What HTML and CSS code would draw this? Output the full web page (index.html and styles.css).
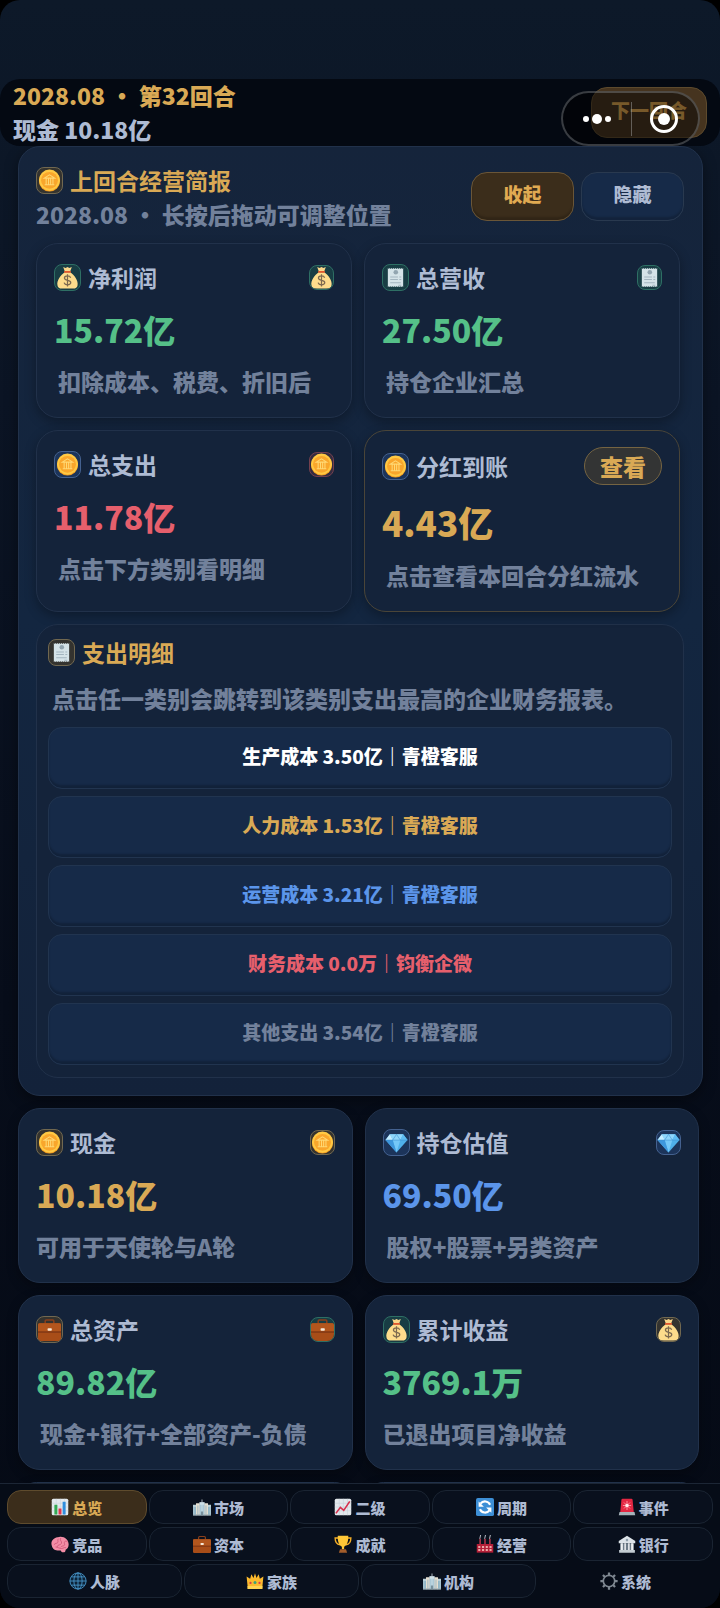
FILE: index.html
```html
<!DOCTYPE html>
<html lang="zh-CN">
<head>
<meta charset="utf-8">
<meta name="viewport" content="width=device-width, initial-scale=1">
<title>总览</title>
<link rel="stylesheet" href="styles.css">
</head>
<body>
<svg class="sprite" aria-hidden="true">
  <symbol id="coin" viewBox="0 0 24 24">
    <circle cx="12" cy="12.5" r="11" fill="#f39a1e"/><circle cx="12" cy="11.6" r="11" fill="#ffc944"/><circle cx="12" cy="11.8" r="8.8" fill="#f9a62b"/>
    <path d="M6.5 9.5 12 6l5.500 3.500zM7 16.500h10M8.500 10v6M11 10v6M13.200 10v6M15.600 10v6" fill="none" stroke="#ffd873" stroke-width="1.100"/>
  </symbol>
  <symbol id="bag" viewBox="0 0 24 24">
    <path d="M7.500 1 10 2l2-1 2 1 2.500-1-1.800 5H9.300z" fill="#f9d68a"/>
    <path d="M9 6.500h6c4 3 8.300 8.500 7.500 13.500-.3 2.500-2 3.500-4.500 3.500H6C3.500 23.500 1.800 22.500 1.500 20 .7 15 5 9.500 9 6.500z" fill="#fddc8c"/>
    <path d="M8.500 5.200h7v1.900h-7z" fill="#e2582e"/>
    <path d="M15.300 12.200c-.5-1.400-1.800-1.900-3.300-1.900-1.800 0-3.200.8-3.200 2.300 0 3.500 6.600 1.300 6.600 4.700 0 1.500-1.500 2.300-3.400 2.300-1.800 0-3.100-.7-3.500-2.200M12 8.500v13" fill="none" stroke="#7d6a50" stroke-width="1.300"/>
  </symbol>
  <symbol id="receipt" viewBox="0 0 24 24">
    <path d="M4 2l1 1 1-1 1 1 1-1 1 1 1-1 1 1 1-1 1 1 1-1 1 1 1-1 1 1 1-1 1 1 1-1v20l-1-1-1 1-1-1-1 1-1-1-1 1-1-1-1 1-1-1-1 1-1-1-1 1-1-1-1 1-1-1-1 1z" fill="#d5e3e8"/>
    <circle cx="12.300" cy="6.500" r="2.400" fill="#92a5b0"/><path d="M6.500 11.500h8M16 11.500h2M6.500 14h8M16 14h2M6.500 17.500h11M15 20h3" stroke="#a3b5bf" stroke-width="1.100"/>
  </symbol>
  <symbol id="gem" viewBox="0 0 24 24">
    <path d="M5 3.500h14l4.500 6L12 22.500.5 9.500z" fill="#4fb0ea"/>
    <path d="M5 3.500h14l-3 6H8z" fill="#8fd6fb"/><path d="M5 3.500 8 9.500H.5z" fill="#c5edff"/><path d="M19 3.500 16 9.500h7.500z" fill="#5fbcf2"/><path d="M8 9.500h8l-4 13z" fill="#75c8f7"/><path d="M.5 9.500H8l4 13z" fill="#3e97dc"/><path d="m8 9.500 4-6 4 6M.5 9.500h23" fill="none" stroke="#3f91d2" stroke-width=".6"/>
  </symbol>
  <symbol id="case" viewBox="0 0 24 24">
    <path d="M7.500 6V3.200c0-.7.400-1.200 1.200-1.200h6.600c.8 0 1.200.5 1.200 1.200V6" fill="none" stroke="#8a3f1b" stroke-width="1.600"/>
    <rect x="0" y="5.500" width="24" height="18.500" rx="1.800" fill="#a84d18"/><path d="M0 7.300c0-1.200.7-1.800 1.800-1.800h20.400c1.100 0 1.800.6 1.800 1.800v7H0z" fill="#b3561d"/><path d="M0 14.200h24v1H0z" fill="#6d2d12"/><rect x="10" y="10.600" width="4.400" height="2.600" rx=".8" fill="#f7e9d8"/>
  </symbol>
  <symbol id="bars" viewBox="0 0 24 24">
    <rect x="1" y="1" width="22" height="22" rx="2" fill="#e4e9ed"/><path d="M1 7h22M1 12h22M1 17h22M7 1v22M12.500 1v22M18 1v22" stroke="#c8d2da" stroke-width=".7"/>
    <path d="M4.500 9h4v13h-4z" fill="#34a853"/><path d="M10 14h4v8h-4z" fill="#e0344e"/><path d="M15.500 5h4v17h-4z" fill="#2f8ede"/>
  </symbol>
  <symbol id="city" viewBox="0 0 24 24">
    <path d="M0 9h5v14H0zM19 9h5v14h-5z" fill="#b7cfd8"/><path d="M4 7h5v16H4zM15 7h5v16h-5z" fill="#e5ded0"/><path d="M8.500 5.500h7V23h-7z" fill="#cfe2ea"/><path d="M11.500 2h1v4h-1z" fill="#dfe8ee"/>
    <path d="M1.500 12v10M3.200 12v10M6.500 10v12M10.500 9v13M13.500 9v13M17.300 10v12M20.800 12v10M22.500 12v10" stroke="#6f9fb7" stroke-width=".8"/><path d="M0 22h24v1.500H0z" fill="#8fa1aa"/><path d="M10.500 18h3v5h-3z" fill="#78909c"/>
  </symbol>
  <symbol id="trend" viewBox="0 0 24 24">
    <rect x="1" y="1" width="22" height="22" rx="2" fill="#e3e8ec"/><path d="M1 7h22M1 12h22M1 17h22M7 1v22M12.500 1v22M18 1v22" stroke="#c4ced6" stroke-width=".7"/><path d="m2.500 20.500 6-8 4.500 4L21 4.500" fill="none" stroke="#d72f4d" stroke-width="2.200"/>
  </symbol>
  <symbol id="cycle" viewBox="0 0 24 24">
    <rect x="0" y="0" width="24" height="24" rx="2.500" fill="#3d8fd6"/><path d="M18.800 9A7.500 7.500 0 0 0 6 7.500M5.200 15A7.500 7.500 0 0 0 18 16.500" fill="none" stroke="#fff" stroke-width="2.800"/><path d="M3.500 4.500v7h7zM20.500 19.500v-7h-7z" fill="#fff"/>
  </symbol>
  <symbol id="siren" viewBox="0 0 24 24">
    <path d="M3 19 4.500 2.500Q4.700 1 6.200 1h11.600q1.500 0 1.700 1.500L21 19z" fill="#e32742"/><path d="M12 4v12M6.500 10h11M8 6l8 8M16 6l-8 8" stroke="#ff98a5" stroke-width="1.200"/><circle cx="12" cy="10" r="2.200" fill="#fff0f0"/><path d="M2 18.500h20l1 4.500H1z" fill="#a5b2b9"/>
  </symbol>
  <symbol id="brain" viewBox="0 0 24 24">
    <path d="M1 14C-1 8 4 2.500 11 2.500c7-1 13 4 12.500 10.500 0 3.500-2 6-4 6.500 0 2-1 3.500-3 3.500-2 .2-3-1-3.500-2.500-5 1-11-.5-12-6.500z" fill="#f48da6"/><path d="M4 13c2-3 4-1 5-3s-1-3 1-5M13 4c-2 4 2 4 1 7s-5 1-6 5M22 9c-3-2-5 0-4 3s-3 2-5 4M6 16c3 0 5 2 8 2s3-2 6-1" fill="none" stroke="#cf5577" stroke-width="1.100"/>
  </symbol>
  <symbol id="cup" viewBox="0 0 24 24">
    <path d="M6 4H1.500c0 5 2 8.500 6.500 9M18 4h4.500c0 5-2 8.500-6.500 9" fill="none" stroke="#f4ae27" stroke-width="1.800"/><path d="M5 1h14c.3 7-1.500 13-5.500 14.500V19h-3v-3.500C6.500 14 4.700 8 5 1z" fill="#ffc737"/><path d="M8 19h8l1.500 4.500h-11z" fill="#a35d2b"/>
  </symbol>
  <symbol id="factory" viewBox="0 0 24 24">
    <path d="M5.500 5v9M12 5v9M18.500 5v9" stroke="#b8354b" stroke-width="2"/><path d="m5 5 1.200-5M11.500 5l1.200-5M18 5l1.200-5" stroke="#c8ced6" stroke-width="1.200"/><path d="M1 12h22v11.500H1z" fill="#b51f38"/><path d="M3 15h2.800v2H3zM8 15h2.800v2H8zM13 15h2.800v2H13zM18 15h2.800v2H18zM3 19h2.800v2H3zM8 19h2.800v2H8zM13 19h2.800v2H13zM18 19h2.800v2H18z" fill="#ffd6cc"/>
  </symbol>
  <symbol id="bank" viewBox="0 0 24 24">
    <path d="M12 1 23 8v3H1V8z" fill="#dce3e8"/><path d="M3 11h18v9H3z" fill="#6d7c88"/><path d="M3.500 11h3v10h-3zM8.500 11h2v10h-2zM13.500 11h2v10h-2zM17.500 11h3v10h-3z" fill="#edf1f3"/><path d="M1.500 20h21v3.500h-21z" fill="#c3ccd2"/><circle cx="12" cy="6.800" r="1.700" fill="#90a0ac"/>
  </symbol>
  <symbol id="globe" viewBox="0 0 24 24">
    <circle cx="12" cy="12" r="10.800" fill="#0c2338"/><g fill="none" stroke="#4795c9" stroke-width="1.200"><circle cx="12" cy="12" r="10.800"/><ellipse cx="12" cy="12" rx="5.500" ry="10.800"/><path d="M12 1v22M1 12h22M3 6.500h18M3 17.500h18"/></g>
  </symbol>
  <symbol id="crown" viewBox="0 0 24 24">
    <path d="m.8 6 4.700 3 1.700-6L10 8l2-6.500L14 8l2.800-5 1.700 6 4.700-3-1.700 16.500h-19z" fill="#fbb92d"/><path d="M2 18.500h20v4H2z" fill="#ffd454"/><circle cx="12" cy="14" r="2" fill="#39a47a"/><circle cx="6" cy="14.500" r="1.500" fill="#d83b50"/><circle cx="18" cy="14.500" r="1.500" fill="#d83b50"/>
  </symbol>
  <symbol id="gear" viewBox="0 0 24 24">
    <circle cx="12" cy="12" r="7.600" fill="none" stroke="#7e8790" stroke-width="2.200"/><path d="M12 .5v4M12 19.500v4M.5 12h4M19.500 12h4M3.900 3.900l2.700 2.700M17.400 17.400l2.700 2.700M20.100 3.900l-2.700 2.700M6.600 17.400l-2.700 2.700" stroke="#7e8790" stroke-width="3"/>
  </symbol>
</svg>

<div class="app">
  <header class="topbar">
    <div class="topbar-info">
      <h1 class="line gold">2028.08 · 第32回合</h1>
      <p class="line soft">现金 10.18亿</p>
    </div>
    <button class="next" type="button">下一回合</button>
    <div class="capsule">
      <button class="capsule-btn" type="button" aria-label="更多"><svg class="dots" viewBox="0 0 30 12"><circle cx="4" cy="6" r="3"/><circle cx="15" cy="6" r="5"/><circle cx="26" cy="6" r="3"/></svg></button>
      <button class="capsule-btn" type="button" aria-label="关闭"><svg class="ring" viewBox="0 0 30 30"><circle cx="15" cy="15" r="12.500" fill="none" stroke="#fff" stroke-width="3"/><circle cx="15" cy="15" r="6"/></svg></button>
    </div>
  </header>

  <main class="content">
    <section class="panel">
      <div class="panel-head">
        <div class="panel-title">
          <h2 class="heading gold"><span class="tile tile-gold"><svg><use href="#coin"/></svg></span>上回合经营简报</h2>
          <p class="line muted">2028.08 · 长按后拖动可调整位置</p>
        </div>
        <button class="btn btn-gold" type="button">收起</button>
        <button class="btn btn-blue" type="button">隐藏</button>
      </div>

      <div class="grid">
        <article class="card">
          <div class="card-head"><h3 class="heading"><span class="tile tile-green"><svg><use href="#bag"/></svg></span>净利润</h3><span class="tile tile-sm tile-green"><svg><use href="#bag"/></svg></span></div>
          <p class="value green">15.72亿</p>
          <p class="note note-in">扣除成本、税费、折旧后</p>
        </article>
        <article class="card">
          <div class="card-head"><h3 class="heading"><span class="tile tile-green"><svg><use href="#receipt"/></svg></span>总营收</h3><span class="tile tile-sm tile-green"><svg><use href="#receipt"/></svg></span></div>
          <p class="value green">27.50亿</p>
          <p class="note note-in">持仓企业汇总</p>
        </article>
        <article class="card">
          <div class="card-head"><h3 class="heading"><span class="tile tile-blue"><svg><use href="#coin"/></svg></span>总支出</h3><span class="tile tile-sm tile-red"><svg><use href="#coin"/></svg></span></div>
          <p class="value red">11.78亿</p>
          <p class="note note-in">点击下方类别看明细</p>
        </article>
        <article class="card card-gold">
          <div class="card-head"><h3 class="heading"><span class="tile tile-blue"><svg><use href="#coin"/></svg></span>分红到账</h3><button class="pill" type="button">查看</button></div>
          <p class="value value-lg gold">4.43亿</p>
          <p class="note note-in">点击查看本回合分红流水</p>
        </article>
      </div>

      <section class="detail">
        <h3 class="heading gold"><span class="tile tile-gold"><svg><use href="#receipt"/></svg></span>支出明细</h3>
        <p class="note note-in detail-note">点击任一类别会跳转到该类别支出最高的企业财务报表。</p>
        <div class="rows">
          <button class="row white" type="button">生产成本 3.50亿｜青橙客服</button>
          <button class="row gold" type="button">人力成本 1.53亿｜青橙客服</button>
          <button class="row blue" type="button">运营成本 3.21亿｜青橙客服</button>
          <button class="row red" type="button">财务成本 0.0万｜钧衡企微</button>
          <button class="row muted" type="button">其他支出 3.54亿｜青橙客服</button>
        </div>
      </section>
    </section>

    <div class="grid summary">
      <article class="card">
        <div class="card-head"><h3 class="heading"><span class="tile tile-gold"><svg><use href="#coin"/></svg></span>现金</h3><span class="tile tile-sm tile-gold"><svg><use href="#coin"/></svg></span></div>
        <p class="value gold">10.18亿</p>
        <p class="note">可用于天使轮与A轮</p>
      </article>
      <article class="card">
        <div class="card-head"><h3 class="heading"><span class="tile tile-blue"><svg><use href="#gem"/></svg></span>持仓估值</h3><span class="tile tile-sm tile-blue"><svg><use href="#gem"/></svg></span></div>
        <p class="value blue">69.50亿</p>
        <p class="note note-in">股权+股票+另类资产</p>
      </article>
      <article class="card">
        <div class="card-head"><h3 class="heading"><span class="tile tile-gold"><svg><use href="#case"/></svg></span>总资产</h3><span class="tile tile-sm tile-green"><svg><use href="#case"/></svg></span></div>
        <p class="value green">89.82亿</p>
        <p class="note note-in">现金+银行+全部资产-负债</p>
      </article>
      <article class="card">
        <div class="card-head"><h3 class="heading"><span class="tile tile-green"><svg><use href="#bag"/></svg></span>累计收益</h3><span class="tile tile-sm tile-gold"><svg><use href="#bag"/></svg></span></div>
        <p class="value green">3769.1万</p>
        <p class="note">已退出项目净收益</p>
      </article>
      <article class="card"></article>
      <article class="card"></article>
    </div>
  </main>

  <nav class="tabs">
    <div class="tab-row">
      <button class="tab tab-on" type="button"><svg><use href="#bars"/></svg>总览</button>
      <button class="tab" type="button"><svg><use href="#city"/></svg>市场</button>
      <button class="tab" type="button"><svg><use href="#trend"/></svg>二级</button>
      <button class="tab" type="button"><svg><use href="#cycle"/></svg>周期</button>
      <button class="tab" type="button"><svg><use href="#siren"/></svg>事件</button>
    </div>
    <div class="tab-row">
      <button class="tab" type="button"><svg><use href="#brain"/></svg>竞品</button>
      <button class="tab" type="button"><svg><use href="#case"/></svg>资本</button>
      <button class="tab" type="button"><svg><use href="#cup"/></svg>成就</button>
      <button class="tab" type="button"><svg><use href="#factory"/></svg>经营</button>
      <button class="tab" type="button"><svg><use href="#bank"/></svg>银行</button>
    </div>
    <div class="tab-row">
      <button class="tab" type="button"><svg><use href="#globe"/></svg>人脉</button>
      <button class="tab" type="button"><svg><use href="#crown"/></svg>家族</button>
      <button class="tab" type="button"><svg><use href="#city"/></svg>机构</button>
      <button class="tab tab-plain" type="button"><svg><use href="#gear"/></svg>系统</button>
    </div>
  </nav>
</div>
</body>
</html>
```
FILE: styles.css
```css
* { box-sizing: border-box; margin: 0; }

body {
  background: #000;
  color: #aebbd3;
  font-family: "Noto Sans CJK SC", sans-serif;
  font-weight: 900;
}

button { font: inherit; color: inherit; padding: 0; }

.sprite { display: none; }

.app {
  display: flex;
  flex-direction: column;
  height: 100vh;
  padding-top: 79px;
  border-radius: 20px;
  overflow: hidden;
  background: linear-gradient(#0d1929 0, #0b1424 400px, #070d1a 1000px, #050a15 100%);
}

.gold { color: #d9a955; }
.soft { color: #aebbd3; }
.muted { color: #72819b; }
.green { color: #55c088; }
.red { color: #e65f6c; }
.blue { color: #5b95ea; }
.white { color: #fff; }

/* Top bar */
.topbar {
  position: relative;
  display: flex;
  flex: none;
  align-items: center;
  justify-content: space-between;
  height: 67px;
  padding: 0 13px;
  border-radius: 20px;
  background: #040912;
}
.topbar-info { padding-bottom: 2px; }
.line { font-size: 23px; line-height: 34px; font-weight: 900; }
.next {
  width: 116px;
  height: 51px;
  padding-bottom: 6px;
  border: 1px solid #5d4a2d;
  border-radius: 16px;
  background: #46341f;
  color: #d9a24e;
  font-size: 19px;
}
.capsule {
  position: absolute;
  top: 12px;
  right: 20px;
  display: flex;
  width: 139px;
  height: 55px;
  border: 2px solid rgba(140, 145, 150, .4);
  border-radius: 28px;
  background: rgba(0, 0, 0, .45);
}
.capsule-btn {
  display: flex;
  flex: 1;
  align-items: center;
  justify-content: center;
  border: 0;
  background: none;
}
.capsule-btn + .capsule-btn { position: relative; }
.capsule-btn + .capsule-btn::before {
  content: "";
  position: absolute;
  left: 0;
  top: 9px;
  width: 1px;
  height: 34px;
  background: rgba(160, 160, 160, .5);
}
.dots { width: 30px; height: 12px; fill: #fff; }
.ring { width: 30px; height: 30px; fill: #fff; }

/* Scroll area */
.content {
  flex: 1;
  min-height: 0;
  overflow: hidden;
  padding: 0 17px 0 18px;
}
.panel {
  padding: 16px 18px 17px 17px;
  border: 1px solid #21314a;
  border-radius: 22px;
  background: linear-gradient(#15243b, #132640 50%, #13223a);
  box-shadow: 0 4px 14px rgba(0, 0, 0, .4);
}
.panel-head { display: flex; align-items: center; gap: 7px; margin-bottom: 12px; }
.panel-title { flex: 1; }
.heading {
  display: flex;
  align-items: center;
  gap: 7px;
  font-size: 23px;
  line-height: 34px;
  white-space: nowrap;
}
.btn {
  width: 103px;
  height: 49px;
  margin-bottom: 2px;
  padding-bottom: 5px;
  border: 1px solid #29394f;
  border-radius: 16px;
  font-size: 19px;
  box-shadow: inset 0 -3px 2px rgba(0, 0, 0, .18);
}
.btn-gold { background: #3b2d1b; border-color: #6a5638; color: #e0aa52; }
.btn-blue { background: #162a48; }

.tile {
  display: flex;
  flex: none;
  align-items: center;
  justify-content: center;
  width: 27px;
  height: 27px;
  border: 1px solid;
  border-radius: 8px;
  overflow: hidden;
}
.tile svg { width: 23px; height: 23px; flex: none; }
.tile-sm { width: 25px; height: 25px; }
.tile-gold { background: #34332f; border-color: #716850; }
.tile-green { background: #183d44; border-color: #2e6f64; }
.tile-blue { background: #1c345a; border-color: #44618f; }
.tile-red { background: #332b40; border-color: #74404e; }

.grid {
  display: grid;
  grid-template-columns: 1fr 1fr;
  gap: 12px;
  padding-right: 4px;
}
.summary { margin-top: 12px; }
.card {
  padding: 16px 17px 19px;
  border: 1px solid #21314a;
  border-radius: 22px;
  background: #14233a;
  box-shadow: 0 4px 12px rgba(0, 0, 0, .3);
}
.card-gold { border-color: #4a4538; }
.card-head { display: flex; align-items: center; justify-content: space-between; }
.value { margin-top: 11px; font-size: 32px; line-height: 48px; }
.value-lg { font-size: 35px; line-height: 51px; }
.note { margin-top: 11px; color: #72819b; font-size: 23px; line-height: 34px; white-space: nowrap; }
.note-in { padding-left: 4px; }
.pill {
  width: 78px;
  height: 38px;
  border: 1px solid #756442;
  border-radius: 19px;
  background: #333434;
  color: #d9a955;
  font-size: 23px;
  line-height: 34px;
}

.detail {
  margin-top: 12px;
  padding: 10px 11px 12px;
  border: 1px solid #21314a;
  border-radius: 22px;
  background: #14233a;
}
.detail-note { margin-top: 12px; margin-bottom: 12px; }
.rows { display: grid; gap: 7px; }
.row {
  height: 62px;
  padding-bottom: 5px;
  border: 1px solid #21344f;
  border-radius: 14px;
  background: #162a48;
  box-shadow: inset 0 -3px 2px rgba(0, 0, 0, .2);
  font-size: 19px;
}

/* Bottom tabs */
.tabs {
  display: grid;
  flex: none;
  gap: 3px;
  padding: 6px 7px 10px;
  border-top: 1px solid #1c2635;
  background: #060c17;
}
.tab-row { display: grid; grid-auto-flow: column; grid-auto-columns: 1fr; gap: 2px; }
.tab {
  display: flex;
  align-items: center;
  justify-content: center;
  gap: 3px;
  height: 34px;
  border: 1px solid #1a2432;
  border-radius: 14px;
  background: #09101d;
  font-size: 15px;
}
.tab svg { width: 18px; height: 18px; }
.tab-on { background: #3b2d1b; border-color: #5e4b2d; color: #d9a955; }
.tab-plain { border-color: transparent; background: none; }
```
